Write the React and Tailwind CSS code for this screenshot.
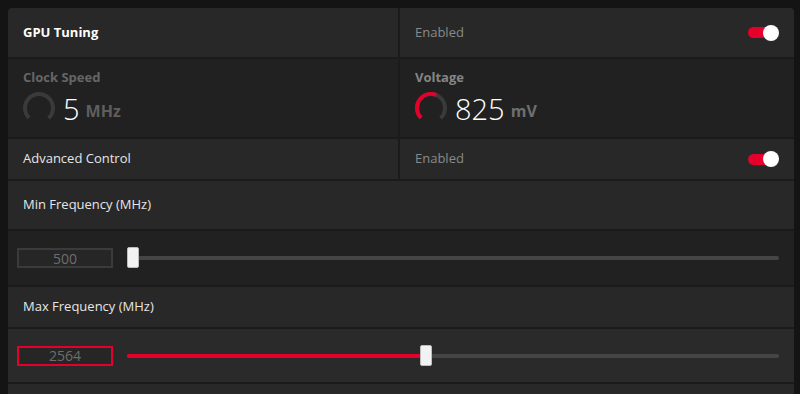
import React from 'react';

const FONT = { fontFamily: '"Open Sans", "Noto Sans", sans-serif' };

// circumference for r=14
const C = 2 * Math.PI * 14;

function Gauge({ fill }) {
	const total = C * 0.75;
	return (
		<svg width="36" height="36" viewBox="0 0 36 36" className="shrink-0">
			<circle
				cx="18"
				cy="18"
				r="14"
				fill="none"
				stroke="#3a3a3a"
				strokeWidth="4"
				strokeDasharray={`${total} ${C}`}
				transform="rotate(135 18 18)"
			/>
			{fill > 0 && (
				<circle
					cx="18"
					cy="18"
					r="14"
					fill="none"
					stroke="#e4002b"
					strokeWidth="4"
					strokeDasharray={`${total * fill} ${C}`}
					transform="rotate(135 18 18)"
				/>
			)}
		</svg>
	);
}

function Toggle() {
	return (
		<div className="relative w-[31px] h-[16px] flex items-center">
			<div className="w-[28px] h-[11px] rounded-full bg-[#e4002b]" />
			<div className="absolute right-0 top-0 w-[16px] h-[16px] rounded-full bg-white" />
		</div>
	);
}

function SliderRow({ value, pct, active, bg, h }) {
	return (
		<div className={`${h} flex items-center pl-[9px] pr-[15px] gap-[14px] border-b-2 border-[#1b1b1b] ${bg}`}>
			<div
				className={`w-[96px] h-[20px] flex items-center justify-center text-[14px] text-[#6e6e6e] bg-[#262626] border-2 ${
					active ? 'border-[#e4002b]' : 'border-[#3b3b3b]'
				}`}>
				{value}
			</div>
			<div className="relative flex-1 h-[22px] flex items-center">
				<div className="w-full h-[4px] rounded-full bg-[#454545]" />
				{pct > 0 && (
					<div className="absolute left-0 h-[4px] rounded-full bg-[#e4002b]" style={{ width: `${pct}%` }} />
				)}
				<div
					className="absolute top-0 w-[12px] h-[21px] rounded-[2px] bg-[#f2f2f2] border border-[#bdbdbd]"
					style={{ left: `calc(${pct}% - ${pct > 0 ? 6 : 0}px)` }}
				/>
			</div>
		</div>
	);
}

export default function App() {
	return (
		<div className="w-[800px] h-[394px] overflow-hidden bg-[#141414] pt-[8px] pl-[8px] pr-[6px]" style={FONT}>
			<div className="rounded-t-[4px] overflow-hidden bg-[#282828]">
				{/* GPU Tuning */}
				<div className="flex h-[51px] border-b-2 border-[#1b1b1b]">
					<div className="w-[392px] flex items-center pl-[15px] text-[13px] font-bold text-white border-r-2 border-[#1b1b1b]">
						GPU Tuning
					</div>
					<div className="flex-1 flex items-center justify-between pl-[15px] pr-[15px]">
						<span className="text-[13px] text-[#8a8a8a]">Enabled</span>
						<Toggle />
					</div>
				</div>

				{/* Clock / Voltage */}
				<div className="flex h-[80px] border-b-2 border-[#1b1b1b] bg-[#212121]">
					<div className="w-[392px] flex flex-col pl-[15px] pt-[9px] border-r-2 border-[#1b1b1b]">
						<span className="text-[13px] font-bold text-[#666666] leading-[18px]">Clock Speed</span>
						<div className="flex items-center gap-[6px] -ml-[2px] mt-[4px]">
							<Gauge fill={0} />
							<span className="text-[29px] font-light text-white leading-none">5</span>
							<span className="text-[16px] font-bold text-[#5e5e5e] mt-[5px]">MHz</span>
						</div>
					</div>
					<div className="flex-1 flex flex-col pl-[15px] pt-[9px]">
						<span className="text-[13px] font-bold text-[#858585] leading-[18px]">Voltage</span>
						<div className="flex items-center gap-[6px] -ml-[2px] mt-[4px]">
							<Gauge fill={0.58} />
							<span className="text-[29px] font-light text-white leading-none">825</span>
							<span className="text-[16px] font-bold text-[#6e6e6e] mt-[5px]">mV</span>
						</div>
					</div>
				</div>

				{/* Advanced Control */}
				<div className="flex h-[42px] border-b-2 border-[#1b1b1b]">
					<div className="w-[392px] flex items-center pl-[15px] text-[13px] text-[#e6e6e6] border-r-2 border-[#1b1b1b]">
						Advanced Control
					</div>
					<div className="flex-1 flex items-center justify-between pl-[15px] pr-[15px]">
						<span className="text-[13px] text-[#8a8a8a]">Enabled</span>
						<Toggle />
					</div>
				</div>

				{/* Min Frequency */}
				<div className="h-[50px] flex items-center pl-[15px] text-[13px] text-[#e6e6e6] border-b-2 border-[#1b1b1b]">
					Min Frequency (MHz)
				</div>
				<SliderRow value="500" pct={0} active={false} bg="bg-[#212121]" h="h-[56px]" />

				{/* Max Frequency */}
				<div className="h-[42px] flex items-center pl-[15px] text-[13px] text-[#e6e6e6] border-b-2 border-[#1b1b1b]">
					Max Frequency (MHz)
				</div>
				<SliderRow value="2564" pct={45.8} active bg="bg-[#2a2a2a]" h="h-[55px]" />

				<div className="h-[40px] bg-[#282828]" />
			</div>
		</div>
	);
}
